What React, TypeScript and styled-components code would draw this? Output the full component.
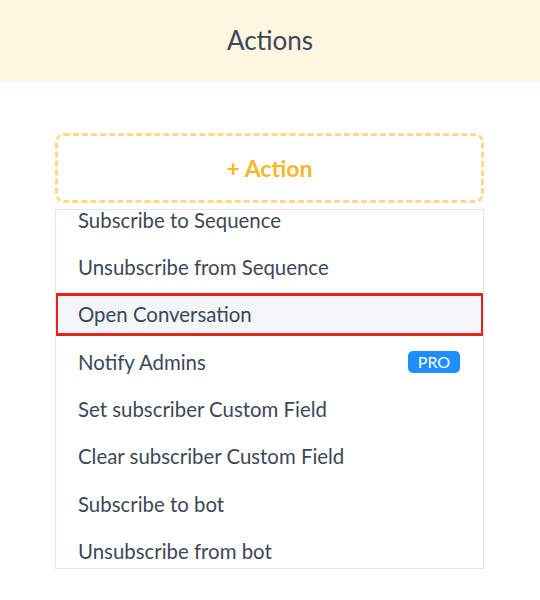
import React from "react";
import styled, { createGlobalStyle } from "styled-components";

const Global = createGlobalStyle`
  html, body { margin: 0; padding: 0; background: #ffffff; }
  body { font-family: Lato, "Open Sans", sans-serif; -webkit-font-smoothing: antialiased; }
`;

const Page = styled.div`
  width: 540px;
  height: 600px;
  background: #ffffff;
  display: flex;
  flex-direction: column;
`;

const Header = styled.header`
  height: 81px;
  background: #fff6e2;
  display: flex;
  align-items: center;
  justify-content: center;
`;

const Title = styled.h1`
  margin: 0;
  font-family: Lato, sans-serif;
  font-weight: 400;
  font-size: 26px;
  color: #3b4658;
  padding-bottom: 2px;
`;

const Body = styled.main`
  padding: 52px 56px 0 55px;
  display: flex;
  flex-direction: column;
  gap: 6px;
`;

const AddButton = styled.button`
  box-sizing: border-box;
  height: 70px;
  width: 100%;
  border: 3px dashed #fed98b;
  border-radius: 9px;
  background: #ffffff;
  display: flex;
  align-items: center;
  justify-content: center;
  font-family: Lato, sans-serif;
  font-size: 23px;
  font-weight: 700;
  color: #fbb52b;
  padding: 0;
  cursor: pointer;
`;

const List = styled.ul`
  box-sizing: border-box;
  margin: 0;
  padding: 0;
  list-style: none;
  height: 360px;
  border: 1px solid #dfe5ec;
  overflow: hidden;
`;

const Scroller = styled.div`
  margin-top: -14px;
  display: flex;
  flex-direction: column;
`;

const Item = styled.li<{ $active?: boolean }>`
  box-sizing: border-box;
  height: ${(p) => (p.$active ? "43px" : "47.2px")};
  margin: ${(p) => (p.$active ? "2.5px -1px 2.5px -1px" : "0")};
  padding: ${(p) => (p.$active ? "0 23px 0 20px" : "0 23px 0 22px")};
  display: flex;
  align-items: center;
  justify-content: space-between;
  font-family: Lato, sans-serif;
  font-size: 20.4px;
  color: #3d4757;
  background: ${(p) => (p.$active ? "#f4f5f9" : "transparent")};
  border: ${(p) => (p.$active ? "3px solid #e0261c" : "none")};
`;

const Pro = styled.span`
  box-sizing: border-box;
  width: 52px;
  height: 22px;
  border-radius: 5px;
  background: #1f8dff;
  color: #ffffff;
  font-family: Lato, sans-serif;
  font-size: 16px;
  display: flex;
  align-items: center;
  justify-content: center;
`;

const items: { label: string; pro?: boolean; active?: boolean }[] = [
  { label: "Subscribe to Sequence" },
  { label: "Unsubscribe from Sequence" },
  { label: "Open Conversation", active: true },
  { label: "Notify Admins", pro: true },
  { label: "Set subscriber Custom Field" },
  { label: "Clear subscriber Custom Field" },
  { label: "Subscribe to bot" },
  { label: "Unsubscribe from bot" },
];

export default function App() {
  return (
    <>
      <Global />
      <Page>
        <Header>
          <Title>Actions</Title>
        </Header>
        <Body>
          <AddButton>+ Action</AddButton>
          <List>
            <Scroller>
              {items.map((it) => (
                <Item key={it.label} $active={it.active}>
                  <span>{it.label}</span>
                  {it.pro && <Pro>PRO</Pro>}
                </Item>
              ))}
            </Scroller>
          </List>
        </Body>
      </Page>
    </>
  );
}
